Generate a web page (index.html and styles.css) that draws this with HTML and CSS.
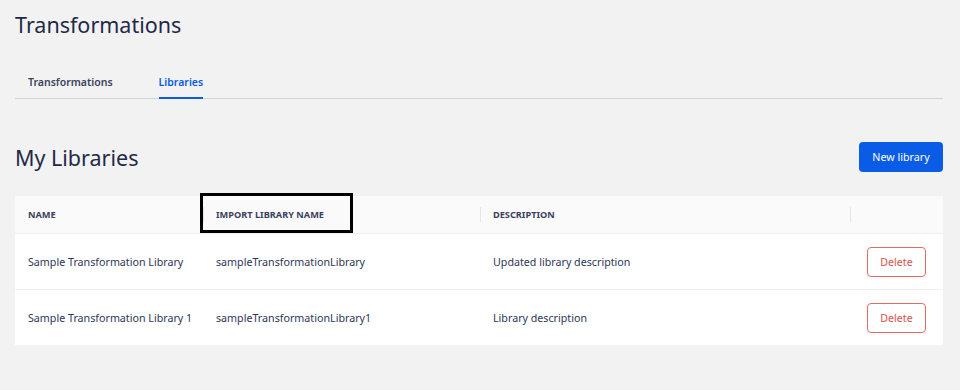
FILE: index.html
```html
<!DOCTYPE html>
<html>
<head>
    <meta charset="UTF-8">
    <title>Transformations</title>
    <link rel="stylesheet" href="styles.css">
</head>
<body>
    <div class="page">
        <h1 class="page-title">Transformations</h1>

        <div class="tabs">
            <span class="tab">Transformations</span>
            <span class="tab active">Libraries</span>
        </div>

        <div class="section-head">
            <h2 class="section-title">My Libraries</h2>
            <button class="btn-primary">New library</button>
        </div>

        <table class="lib-table">
            <colgroup>
                <col style="width: 188px">
                <col style="width: 277px">
                <col style="width: 370px">
                <col style="width: 93px">
            </colgroup>
            <thead>
                <tr>
                    <th>Name</th>
                    <th class="marked">Import library name<span class="mark-box"></span></th>
                    <th>Description</th>
                    <th></th>
                </tr>
            </thead>
            <tbody>
                <tr>
                    <td>Sample Transformation Library</td>
                    <td>sampleTransformationLibrary</td>
                    <td>Updated library description</td>
                    <td class="actions"><button class="btn-delete">Delete</button></td>
                </tr>
                <tr>
                    <td>Sample Transformation Library 1</td>
                    <td>sampleTransformationLibrary1</td>
                    <td>Library description</td>
                    <td class="actions"><button class="btn-delete">Delete</button></td>
                </tr>
            </tbody>
        </table>
    </div>
</body>
</html>
```

FILE: styles.css
```css
body {
    margin: 0;
    background-color: #f2f2f2;
    font-family: "Noto Sans", "Open Sans", sans-serif;
    color: #2b3452;
}

.page {
    padding: 7px 17px 0 15px;
}

.page-title {
    margin: 0;
    font-size: 21.5px;
    font-weight: 400;
    line-height: 36px;
    color: #1f2947;
}

.tabs {
    display: flex;
    gap: 46px;
    margin-top: 31px;
    padding-left: 13px;
    border-bottom: 1px solid #cdd3de;
}

.tab {
    font-size: 10.5px;
    font-weight: 600;
    line-height: 16px;
    padding-bottom: 7px;
    margin-bottom: -1px;
    color: #3a4160;
    border-bottom: 2px solid transparent;
}

.tab.active {
    color: #0a5ce6;
    border-bottom-color: #0a5ce6;
}

.section-head {
    display: flex;
    justify-content: space-between;
    align-items: center;
    margin-top: 43px;
}

.section-title {
    margin: 0;
    font-size: 21.5px;
    font-weight: 400;
    color: #1f2947;
}

.btn-primary {
    width: 84px;
    height: 30px;
    padding: 0;
    border: none;
    border-radius: 4px;
    background-color: #0a5ce6;
    color: #fff;
    font-family: inherit;
    font-size: 10.7px;
}

.lib-table {
    margin-top: 24px;
    width: 928px;
    table-layout: fixed;
    border-collapse: collapse;
    background-color: #fff;
}

.lib-table th {
    position: relative;
    height: 37px;
    padding: 0 13px;
    text-align: left;
    font-size: 9.2px;
    font-weight: 700;
    text-transform: uppercase;
    color: #3a4160;
    background-color: #fafafa;
    border-bottom: 1px solid #efefef;
}

.lib-table th + th::before {
    content: "";
    position: absolute;
    left: 0;
    top: 11px;
    height: 15px;
    width: 1px;
    background-color: #e6e6e6;
}

.mark-box {
    position: absolute;
    left: -3px;
    top: -3px;
    width: 153px;
    height: 40px;
    box-sizing: border-box;
    border: 3px solid #000;
}

.lib-table td {
    height: 55px;
    padding: 0 13px;
    font-size: 10.7px;
    white-space: nowrap;
    color: #2e3656;
    border-bottom: 1px solid #efefef;
}

.lib-table tr:last-child td {
    border-bottom: none;
}

.lib-table td.actions {
    text-align: right;
    padding-right: 17px;
}

.btn-delete {
    width: 59px;
    height: 30px;
    border: 1px solid #e06a64;
    border-radius: 4px;
    background-color: #fff;
    color: #d9534f;
    font-family: inherit;
    font-size: 10.7px;
}
```
